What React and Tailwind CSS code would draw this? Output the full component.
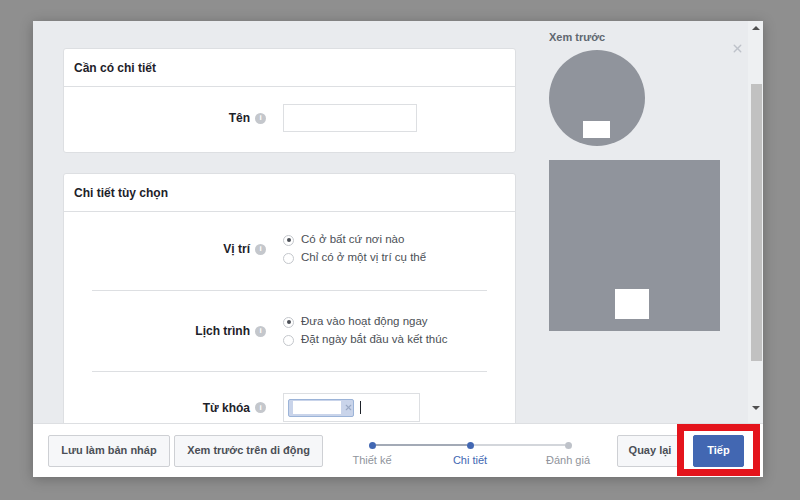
import React from "react";
import { X } from "lucide-react";

function Info() {
  return (
    <span className="ml-[5px] inline-flex h-[11px] w-[11px] items-center justify-center rounded-full bg-[#c4c7cc] text-[8px] font-bold leading-none text-white">
      i
    </span>
  );
}

function Radio({ checked, children }) {
  return (
    <div className="flex h-[18px] items-center">
      <span className="flex h-[11px] w-[11px] items-center justify-center rounded-full border border-[#c4c7cc] bg-white">
        {checked && <span className="h-[4px] w-[4px] rounded-full bg-[#4b4f56]" />}
      </span>
      <span className="ml-[7px] text-[11.5px] text-[#4b4f56]">{children}</span>
    </div>
  );
}

function Row({ label, children, className }) {
  return (
    <div className={"flex items-center " + (className || "")}>
      <div className="flex w-[202px] items-center justify-end">
        <span className="text-[12px] font-bold text-[#1d2129]">{label}</span>
        <Info />
      </div>
      <div className="ml-[17px]">{children}</div>
    </div>
  );
}

function Card({ title, children }) {
  return (
    <div className="shrink-0 rounded-[3px] border border-[#dddfe2] bg-white">
      <div className="flex h-[38px] items-center border-b border-[#dddfe2] px-[10px]">
        <span className="text-[12px] font-bold text-[#1d2129]">{title}</span>
      </div>
      {children}
    </div>
  );
}

function Step({ label, active, done, first, last }) {
  return (
    <div className="flex w-[98px] flex-col items-center self-start">
      <div className="mt-[7px] flex h-[7px] w-full items-center">
        <div className={"h-[2px] flex-1 " + (first ? "" : done || active ? "bg-[#a3aab6]" : "bg-[#d3d6db]")} />
        <div className={"h-[7px] w-[7px] rounded-full " + (done || active ? "bg-[#4267b2]" : "bg-[#bec2c9]")} />
        <div className={"h-[2px] flex-1 " + (last ? "" : done ? "bg-[#a3aab6]" : "bg-[#d3d6db]")} />
      </div>
      <span className={"mt-[4px] text-[11px] leading-[14px] " + (active ? "text-[#4267b2]" : "text-[#90949c]")}>
        {label}
      </span>
    </div>
  );
}

export default function App() {
  return (
    <div className="h-[500px] w-[800px] overflow-hidden bg-[#8f8f8f] pl-[33px] pt-[21px] font-['Liberation_Sans',Arial,sans-serif]">
      <div className="relative flex h-[456px] w-[730px] flex-col bg-[#e9ebee] shadow-[0_2px_12px_rgba(0,0,0,0.25)]">
        <div className="relative flex h-[402px]">
          <div className="flex w-[483px] shrink-0 flex-col gap-[20px] overflow-hidden pl-[30px] pt-[27px]">
            <Card title="Cần có chi tiết">
              <Row label="Tên" className="h-[65px] pb-[3px]">
                <div className="h-[28px] w-[134px] border border-[#dddfe2] bg-white" />
              </Row>
            </Card>
            <Card title="Chi tiết tùy chọn">
              <Row label="Vị trí" className="pb-[23px] pt-[19px]">
                <Radio checked>Có ở bất cứ nơi nào</Radio>
                <Radio>Chỉ có ở một vị trí cụ thể</Radio>
              </Row>
              <div className="mx-[28px] h-px bg-[#dddfe2]" />
              <Row label="Lịch trình" className="pb-[22px] pt-[22px]">
                <Radio checked>Đưa vào hoạt động ngay</Radio>
                <Radio>Đặt ngày bắt đầu và kết thúc</Radio>
              </Row>
              <div className="mx-[28px] h-px bg-[#dddfe2]" />
              <Row label="Từ khóa" className="pb-[24px] pt-[21px]">
                <div className="flex h-[29px] w-[137px] items-center border border-[#dddfe2] bg-white pl-[4px]">
                  <div className="flex h-[18px] w-[66px] items-center rounded-[2px] border border-[#9cb4d8] bg-[#c9d4ea] pl-[4px]">
                    <div className="h-[13px] w-[48px] bg-white" />
                    <X size={9} strokeWidth={3} className="ml-[3px] text-[#9aa9c4]" />
                  </div>
                  <div className="ml-[6px] h-[13px] w-px bg-[#1d2129]" />
                </div>
              </Row>
            </Card>
          </div>

          <div className="ml-[33px] w-[171px] shrink-0 pt-[10px]">
            <div className="text-[11px] font-bold leading-[13px] text-[#606770]">Xem trước</div>
            <div className="mt-[6px] flex h-[96px] w-[96px] items-end justify-center rounded-full bg-[#90949c] pb-[8px] pr-[2px]">
              <div className="h-[17px] w-[27px] bg-white" />
            </div>
            <div className="mt-[14px] flex h-[171px] w-[171px] items-end justify-center bg-[#90949c] pb-[12px] pr-[5px]">
              <div className="h-[30px] w-[34px] bg-white" />
            </div>
          </div>

          <X size={13} strokeWidth={2.5} className="absolute left-[698px] top-[21px] text-[#bec2c9]" />

          <div className="ml-auto flex w-[15px] flex-col items-center bg-[#eef0f2]">
            <div className="mt-[5px] h-0 w-0 border-x-[4px] border-b-[4px] border-x-transparent border-b-[#505050]" />
            <div className="ml-[2px] mt-[54px] h-[277px] w-[11px] bg-[#c1c1c1]" />
            <div className="mt-[45px] h-0 w-0 border-x-[4px] border-t-[4px] border-x-transparent border-t-[#505050]" />
          </div>
        </div>

        <div className="flex h-[54px] items-center border-t border-[#dddfe2] bg-white pl-[15px]">
          <button className="h-[32px] w-[122px] rounded-[2px] border border-[#ced0d4] bg-[#f6f7f9] text-[11px] font-bold text-[#4b4f56]">
            Lưu làm bản nháp
          </button>
          <button className="ml-[4px] h-[32px] w-[149px] rounded-[2px] border border-[#ced0d4] bg-[#f6f7f9] text-[11px] font-bold text-[#4b4f56]">
            Xem trước trên di động
          </button>
          <div className="flex h-[32px]">
            <Step label="Thiết kế" done first />
            <Step label="Chi tiết" active />
            <Step label="Đánh giá" last />
          </div>
          <button className="h-[32px] w-[66px] rounded-[2px] border border-[#ced0d4] bg-[#f6f7f9] text-[11px] font-bold text-[#4b4f56]">
            Quay lại
          </button>
          <button className="ml-[10px] h-[32px] w-[51px] rounded-[2px] border border-[#4267b2] bg-[#4267b2] text-[11px] font-bold text-white">
            Tiếp
          </button>
        </div>

        <div className="absolute left-[644px] top-[403px] h-[52px] w-[83px] border-[7px] border-[#e4141c]" />
      </div>
    </div>
  );
}
